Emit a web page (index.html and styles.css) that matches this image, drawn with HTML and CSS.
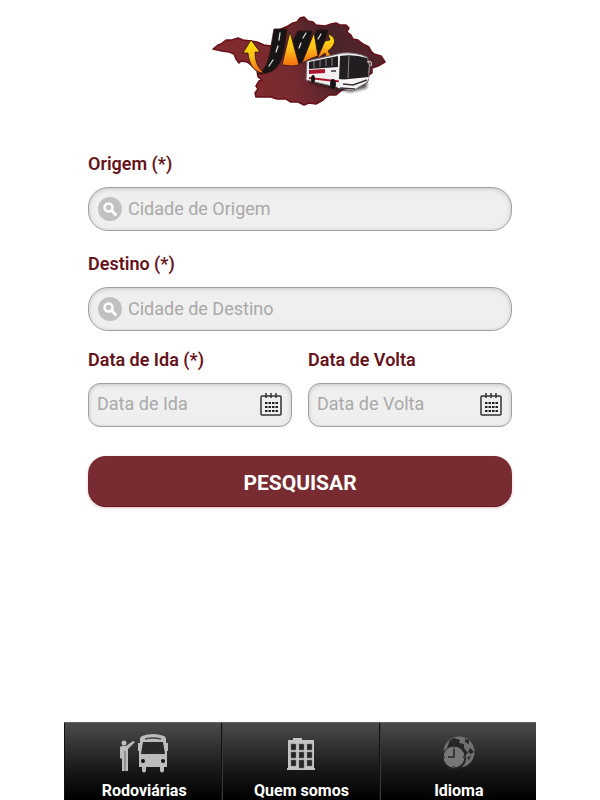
FILE: index.html
```html
<!DOCTYPE html>
<html lang="pt-BR">
<head>
<meta charset="utf-8">
<meta name="viewport" content="width=device-width, initial-scale=1">
<title>JVR</title>
<link rel="stylesheet" href="styles.css">
</head>
<body>
<div class="app">
  <header class="header">
    <svg class="logo" viewBox="210 14 178 94" role="img" aria-label="JVR">
      <defs>
        <linearGradient id="land" x1="0" x2="1" y1=".2" y2="0">
          <stop offset="0" stop-color="#842a2e"/><stop offset=".35" stop-color="#762a2f"/><stop offset=".62" stop-color="#4a242a"/><stop offset="1" stop-color="#58222a"/>
        </linearGradient>
        <linearGradient id="flame" x1="0" x2="0" y1="0" y2="1">
          <stop offset="0" stop-color="#ffe600"/><stop offset=".5" stop-color="#ffc01a"/><stop offset="1" stop-color="#f56a10"/>
        </linearGradient>
        <filter id="soft" x="-20%" y="-50%" width="140%" height="200%"><feGaussianBlur stdDeviation="1.5"/></filter>
      </defs>
      <path fill="url(#land)" stroke="#681018" stroke-width="1.500" stroke-linejoin="round" d="M212 49L217 45L220 44L225 40L231 40L237 38L242 40L250 41L256 42L263 45L270 46L278 30L287 26L292 23L296 22L299 18L303 17L307 21L312 22L315 25L324 26L330 24L335 23L339 25L345 25L348 28L346 32L350 35L352 39L357 40L362 44L368 47L370 51L373 54L380 56L384 62L377 66L371 68L371 73L368 75L366 82L358 84L353 85L348 89L341 90L335 95L328 95L322 100L315 104L308 103L303 105L297 102L290 102L285 99L276 99L270 97L262 97L255 97L254 93L257 89L255 86L258 81L261 80L257 77L256 71L250 65L246 62L240 61L238 63L235 59L233 54L228 52L221 51Z"/>
      <g stroke="#301413" stroke-width=".8" stroke-linejoin="round">
        <path fill="#171514" d="M273 29h13c-2 13-2 28-10 38-5 6-12 7-20 7 13-5 13-25 17-45z"/>
        <path fill="#171514" d="M297 31h14l-6 28-7 5-8-20z"/>
        <path fill="#171514" d="M316 30h11l-4 14-7 16-5-20z"/>
        <path fill="url(#flame)" d="M250 40l9 12h-5c0 11 4 17 9 21-9 0-15-8-16-20h-5z"/>
        <path fill="url(#flame)" d="M289 32l9 33-7 1-10-1z"/>
        <path fill="url(#flame)" d="M313 33l4 23-6 2-10 5z"/>
        <path fill="url(#flame)" d="M327 34c11 4 6 13 0 17l5 8-6 0-2-6-8 6 8-18 5-1z"/>
      </g>
      <g fill="none" stroke="#ddd" stroke-width="1.300" stroke-linecap="round">
        <path d="M279 33l-1 7M277 46l-2 6M272 60l-4 6"/><path d="M305 33l-3 5M300 43l-2 5M320 34l-3 5"/>
      </g>
      <path fill="#190a0d" opacity=".7" filter="url(#soft)" d="M309 83l40 9 17-4v-9l-55 1z"/>
      <path fill="#f1efef" stroke="#746b6c" d="M306 61l35-8q14-1 25 4l3 8-2 16-15 10-47-11z"/>
      <path fill="#211d20" d="M308 62l29-6v11l-29 2zM339 56q14-2 27 2l2 7-1 14-15 2-14-2z"/>
      <path stroke="#b8b2b4" stroke-width=".7" fill="none" d="M313 61v7M319 60v7M325 59v7M331 58v8M348 56l-1 22"/>
      <path fill="#aa142c" d="M308 70l16-1v4l-16 1zM308 77l44 5v2l-44-5z"/>
      <path fill="#f7f5f5" d="M338 80l30-3-2 5-15 8-14-2z"/>
      <path stroke="#343034" stroke-width="1.500" fill="none" d="M342 84l10 1 14-5M339 88l15 1M330 71h5"/>
      <g fill="#171417"><ellipse cx="312" cy="79" rx="2" ry="4"/><ellipse cx="332" cy="84" rx="3" ry="5"/></g>
      <path stroke="#f2eded" fill="none" d="M366 62q6-2 4 4"/>
    </svg>
  </header>
  <main>
    <form class="form">
      <div class="field">
        <label for="origem">Origem (*)</label>
        <div class="control round">
          <svg class="search" viewBox="0 0 24 24" aria-hidden="true"><circle cx="12" cy="12" r="12" fill="#c1c1c1"/><circle cx="10.500" cy="10.500" r="4" fill="none" stroke="#fff" stroke-width="2.500"/><path d="M13.500 13.500l4 4" stroke="#fff" stroke-width="3" stroke-linecap="round"/></svg>
          <input id="origem" type="text" placeholder="Cidade de Origem">
        </div>
      </div>
      <div class="field">
        <label for="destino">Destino (*)</label>
        <div class="control round">
          <svg class="search" viewBox="0 0 24 24" aria-hidden="true"><circle cx="12" cy="12" r="12" fill="#c1c1c1"/><circle cx="10.500" cy="10.500" r="4" fill="none" stroke="#fff" stroke-width="2.500"/><path d="M13.500 13.500l4 4" stroke="#fff" stroke-width="3" stroke-linecap="round"/></svg>
          <input id="destino" type="text" placeholder="Cidade de Destino">
        </div>
      </div>
      <div class="dates">
        <div class="field">
          <label for="ida">Data de Ida (*)</label>
          <div class="control">
            <input id="ida" type="text" placeholder="Data de Ida">
            <svg class="calendar" viewBox="0 0 24 24" aria-hidden="true"><path d="M3 4h18q1 0 1 1v17q0 1-1 1H3q-1 0-1-1V5q0-1 1-1zM7 1v5M12 1v5M17 1v5" fill="none" stroke="#333" stroke-width="1.500"/><path d="M6 11h13M6 15h13M6 19h13" stroke="#222" stroke-width="2" stroke-dasharray="2.500 1"/></svg>
          </div>
        </div>
        <div class="field">
          <label for="volta">Data de Volta</label>
          <div class="control">
            <input id="volta" type="text" placeholder="Data de Volta">
            <svg class="calendar" viewBox="0 0 24 24" aria-hidden="true"><path d="M3 4h18q1 0 1 1v17q0 1-1 1H3q-1 0-1-1V5q0-1 1-1zM7 1v5M12 1v5M17 1v5" fill="none" stroke="#333" stroke-width="1.500"/><path d="M6 11h13M6 15h13M6 19h13" stroke="#222" stroke-width="2" stroke-dasharray="2.500 1"/></svg>
          </div>
        </div>
      </div>
      <button class="submit" type="submit">PESQUISAR</button>
    </form>
  </main>
  <nav class="tabs">
    <a href="#rodoviarias">
      <svg width="50" height="40" viewBox="0 0 50 40" aria-hidden="true"><g fill="#bcbcbc"><path d="M21 5q0-2 2-3 11-4 22 0 2 1 2 3v4h2v8h-1v16h-3v4q-2 3-4 0v-4H27v4q-2 3-4 0v-4h-3V17h-1V9h2z"/><circle cx="5" cy="9" r="2.500"/><path d="M1 13q2-2 6-1l7-5 2 1-7 7v22H3V25l-2-1z"/></g><path d="M24 8h20l2 12H22z" fill="#292929"/><path d="M26 5q8-2 16 0" stroke="#444" fill="none" stroke-width="1.500"/><g fill="#111"><circle cx="24" cy="27" r="2"/><circle cx="44" cy="27" r="2"/></g><path d="M6 17v20" stroke="#666"/></svg>
      <span>Rodoviárias</span>
    </a>
    <a href="#quem-somos">
      <svg width="30" height="40" viewBox="0 0 30 40" aria-hidden="true"><path fill="#c4c4c4" d="M2 6h5V4h9v2h12v28h1v2H1v-2h1z"/><g fill="#252525" stroke="#777" stroke-width=".5"><path d="M5 10h5v6H5zM13 10h5v6h-5zM21 10h5v6h-5zM5 18h5v6H5zM13 18h5v6h-5zM21 18h5v6h-5zM5 26h5v6H5zM21 26h5v6h-5zM13 26h5v8h-5z"/></g></svg>
      <span>Quem somos</span>
    </a>
    <a href="#idioma">
      <svg width="34" height="40" viewBox="0 0 34 40" aria-hidden="true"><circle cx="17" cy="18" r="15.500" fill="#707070"/><path fill="#272727" d="M8 6l4-2 6 2-1 3 5 1 0 4 4 5-4 3-7-4-6 1-4-5zM23 5l4 1 0 4-4-2zM28 14l4 4-3 2-3-2zM25 24l4-3-2 5z"/><circle cx="12" cy="24" r="12" fill="#222"/><circle cx="12" cy="23" r="10.500" fill="#777"/><path d="M12 15v8H6M12 13v1M12 32v1M21 23h1M2 23h1" stroke="#242424" stroke-width="1.500" fill="none"/></svg>
      <span>Idioma</span>
    </a>
  </nav>
</div>
</body>
</html>
```

FILE: styles.css
```css
* { box-sizing: border-box; }

body {
  margin: 0;
  background: #fff;
  font-family: Roboto, "Liberation Sans", sans-serif;
  font-size: 18px;
  line-height: 24px;
}

.app {
  display: flex;
  flex-direction: column;
  min-height: 100vh;
  margin: 0 64px;
}

.header {
  display: flex;
  justify-content: center;
  padding-top: 14px;
}

.logo { width: 178px; }

main { flex: 1; }

.form {
  display: flex;
  flex-direction: column;
  padding: 44px 24px 32px;
}

.field {
  display: flex;
  flex-direction: column;
  gap: 11px;
  min-width: 0;
  margin-bottom: 21px;
}

label {
  color: #65131b;
  font-weight: 600;
}

.control {
  display: flex;
  align-items: center;
  gap: 6px;
  height: 44px;
  padding: 0 8px;
  border: 1px solid #a0a0a0;
  border-radius: 12px;
  background: #efefef;
  box-shadow: inset 0 1px 4px #c4c4c4;
}

.control.round { border-radius: 20px; padding: 0 9px; }

.control input {
  flex: 1;
  min-width: 0;
  padding: 0;
  border: 0;
  outline: 0;
  background: transparent;
  color: #444;
  font: inherit;
}

.control input::placeholder { color: #a9a9a9; opacity: 1; }

.search, .calendar { flex: none; width: 24px; height: 24px; }

.dates {
  display: grid;
  grid-template-columns: 1fr 1fr;
  gap: 16px;
  margin-top: -4px;
}

.dates .control { padding-bottom: 3px; }

.submit {
  height: 51px;
  margin-top: 8px;
  padding: 3px 0 0;
  border: 0;
  border-bottom: 1px solid #650e18;
  border-radius: 18px;
  background: #792b32;
  box-shadow: 0 1px 3px #dabfc2;
  color: #fff;
  font: 700 21px/24px Roboto, "Liberation Sans", sans-serif;
}

.tabs {
  display: grid;
  grid-template-columns: repeat(3, 1fr);
  background: linear-gradient(#4b4b4b, #151515 65%, #000);
  border-top: 1px solid #626262;
}

.tabs a {
  display: flex;
  flex-direction: column;
  align-items: center;
  gap: 8px;
  padding: 11px 0 0 2px;
  border-left: 1px solid #101010;
  color: #fff;
  font-size: 16px;
  font-weight: 700;
  line-height: 18px;
  text-decoration: none;
}

.tabs a + a { box-shadow: inset 1px 0 #393939; }
```
